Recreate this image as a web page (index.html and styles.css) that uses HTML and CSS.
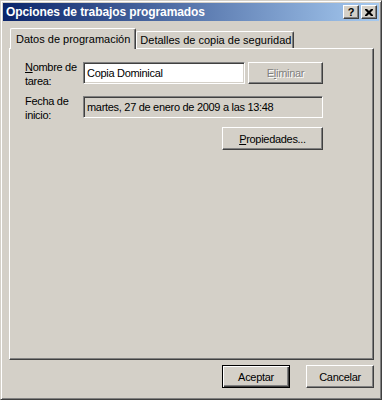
FILE: index.html
```html
<!DOCTYPE html>
<html lang="es">
<head>
    <meta charset="UTF-8">
    <title>Opciones de trabajos programados</title>
    <link rel="stylesheet" href="styles.css">
</head>
<body>
    <div class="window">
        <div class="titlebar">
            <span class="title">Opciones de trabajos programados</span>
            <div class="title-buttons">
                <span class="tbtn help">?</span>
                <span class="tbtn close">
                    <svg width="8" height="7" viewBox="0 0 8 7">
                        <path d="M0 0h2l2 2 2-2h2v1l-2.5 2.5L8 6v1H6L4 5 2 7H0V6l2.5-2.5L0 1z" fill="#000"/>
                    </svg>
                </span>
            </div>
        </div>
        <div class="content">
            <div class="tabs">
                <div class="tab active">Datos de programación</div>
                <div class="tab">Detalles de copia de seguridad</div>
            </div>
            <div class="panel">
                <div class="row">
                    <label class="field-label" for="taskName">
                        <span class="label-line"><u>N</u>ombre de</span>
                        <span class="label-line">tarea:</span>
                    </label>
                    <input class="text-input" id="taskName" type="text" value="Copia Dominical">
                    <button class="btn btn-remove" disabled>E<u>l</u>iminar</button>
                </div>
                <div class="row row-date">
                    <span class="field-label">
                        <span class="label-line">Fecha de</span>
                        <span class="label-line">inicio:</span>
                    </span>
                    <div class="readonly-field">martes, 27 de enero de 2009 a las 13:48</div>
                </div>
                <div class="row row-props">
                    <button class="btn btn-props"><u>P</u>ropiedades...</button>
                </div>
            </div>
            <div class="footer">
                <button class="btn btn-default">Aceptar</button>
                <button class="btn">Cancelar</button>
            </div>
        </div>
    </div>
</body>
</html>
```

FILE: styles.css
```css
body {
    margin: 0;
    padding: 0;
    background: #d4d0c8;
    font-family: "Liberation Sans", Arial, sans-serif;
    font-size: 11px;
    letter-spacing: -0.3px;
    color: #000;
}
.window {
    width: 382px;
    height: 400px;
    box-sizing: border-box;
    background: #d4d0c8;
    border: 1px solid;
    border-color: #d4d0c8 #404040 #404040 #d4d0c8;
    box-shadow: inset 1px 1px #fff, inset -1px -1px #808080;
    padding: 2px;
    display: flex;
    flex-direction: column;
}
.titlebar {
    height: 18px;
    display: flex;
    align-items: center;
    justify-content: space-between;
    padding: 0 2px;
    background: linear-gradient(to right, #0a246a, #a6caf0);
}
.title {
    color: #fff;
    font-weight: bold;
    font-size: 12px;
    letter-spacing: -0.1px;
    padding-left: 1px;
}
.title-buttons {
    display: flex;
}
.tbtn {
    width: 14px;
    height: 12px;
    border: 1px solid;
    border-color: #fff #404040 #404040 #fff;
    box-shadow: inset -1px -1px #808080;
    background: #d4d0c8;
    display: flex;
    align-items: center;
    justify-content: center;
    font-weight: bold;
    font-size: 11px;
    letter-spacing: 0;
    line-height: 12px;
}
.tbtn.close {
    margin-left: 2px;
}
.content {
    flex: 1;
    display: flex;
    flex-direction: column;
    padding: 7px 5px 0 6px;
}
.tabs {
    display: flex;
    align-items: flex-end;
    padding-left: 1px;
    height: 20px;
    position: relative;
    z-index: 1;
}
.tab {
    height: 16px;
    padding: 0 2px 0 3px;
    border: 1px solid;
    border-bottom: none;
    border-color: #fff #404040 #fff #fff;
    box-shadow: inset -1px 0 #808080;
    border-radius: 2px 2px 0 0;
    display: flex;
    align-items: center;
    white-space: nowrap;
    letter-spacing: 0;
}
.tab.active {
    height: 20px;
    margin-bottom: -1px;
    padding: 0 5px 0 5px;
    background: #d4d0c8;
}
.panel {
    height: 312px;
    box-sizing: border-box;
    border: 1px solid;
    border-color: #fff #404040 #404040 #fff;
    box-shadow: inset -1px -1px #808080;
    padding: 13px 0 0 15px;
    display: flex;
    flex-direction: column;
}
.row {
    display: flex;
    align-items: flex-start;
    height: 22px;
}
.row-date {
    margin-top: 12px;
}
.row-props {
    margin-top: 9px;
    padding-left: 197px;
}
.field-label {
    width: 58px;
    margin-top: -2px;
    display: flex;
    flex-direction: column;
}
.label-line {
    display: block;
    line-height: 14px;
    white-space: nowrap;
}
.text-input,
.readonly-field {
    height: 22px;
    box-sizing: border-box;
    border: 1px solid;
    border-color: #808080 #fff #fff #808080;
    box-shadow: inset 1px 1px #404040, inset -1px -1px #d4d0c8;
    font-family: inherit;
    font-size: 11px;
    letter-spacing: -0.3px;
    padding: 0 3px;
    margin: 0;
    outline: none;
}
.text-input {
    width: 162px;
    background: #fff;
}
.readonly-field {
    width: 240px;
    background: #d4d0c8;
    display: flex;
    align-items: center;
}
.btn {
    height: 23px;
    box-sizing: border-box;
    border: 1px solid;
    border-color: #fff #404040 #404040 #fff;
    box-shadow: inset -1px -1px #808080;
    background: #d4d0c8;
    font-family: inherit;
    font-size: 11px;
    letter-spacing: -0.3px;
    color: #000;
    padding: 0;
    margin: 0;
}
.btn-remove {
    width: 75px;
    height: 22px;
    margin-left: 3px;
    color: #808080;
    text-shadow: 1px 1px #fff;
}
.btn-props {
    width: 101px;
}
.footer {
    display: flex;
    justify-content: flex-end;
    gap: 16px;
    padding: 5px 0 0 0;
}
.footer .btn {
    width: 68px;
    height: 23px;
}
.btn-default {
    border: 1px solid #000;
    box-shadow: inset 1px 1px #fff, inset -1px -1px #404040, inset -2px -2px #808080;
}
```
